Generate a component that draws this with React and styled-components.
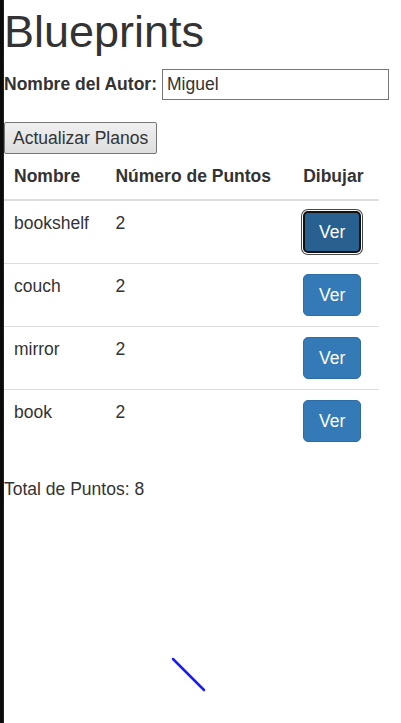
import React from "react";
import styled, { createGlobalStyle } from "styled-components";

const GlobalStyle = createGlobalStyle`
  html, body {
    margin: 0;
    padding: 0;
    background: #fff;
  }
  body {
    font-family: "Liberation Sans", Arial, sans-serif;
    font-size: 17.5px;
    line-height: 1.42857;
    color: #333;
    border-left: 3px solid #0b0b0b;
    box-shadow: inset 1px 0 0 #4a0d12;
    min-height: 723px;
    box-sizing: border-box;
  }
`;

const Page = styled.div`
  padding-left: 1px;
  width: 375px;
`;

const Title = styled.h1`
  margin: 7px 0 0;
  font-size: 45px;
  font-weight: 500;
  line-height: 1.1;
`;

const AuthorRow = styled.div`
  display: flex;
  align-items: center;
  gap: 5px;
  margin-top: 12.5px;
  width: 400px;
  label {
    font-weight: 700;
    white-space: nowrap;
    flex-shrink: 0;
  }
`;

const TextInput = styled.input`
  width: 227px;
  height: 31px;
  flex-shrink: 0;
  box-sizing: border-box;
  border: 1px solid #767676;
  padding: 1px 4px;
  font-family: "Liberation Sans", Arial, sans-serif;
  font-size: 17.5px;
  color: #333;
`;

const UpdateButton = styled.button`
  margin-top: 22px;
  height: 32px;
  padding: 0 8px;
  border: 1px solid #767676;
  border-radius: 2px;
  background: linear-gradient(#f0f0f0, #dedede);
  font-family: "Liberation Sans", Arial, sans-serif;
  font-size: 17.5px;
  color: #333;
`;

const Table = styled.table`
  width: 375px;
  border-collapse: collapse;
  margin-bottom: 25px;
  th, td {
    padding: 10px;
    text-align: left;
    vertical-align: top;
    line-height: 25px;
  }
  th {
    font-weight: 700;
    border-bottom: 2px solid #ddd;
    vertical-align: bottom;
  }
  tbody tr + tr td {
    border-top: 1px solid #ddd;
  }
`;

const VerButton = styled.button`
  width: 58px;
  height: 42px;
  border-radius: 5px;
  border: 1px solid #2e6da4;
  background: #337ab7;
  color: #fff;
  font-family: "Liberation Sans", Arial, sans-serif;
  font-size: 17.5px;
  ${(p) =>
    p.$focused &&
    `
    background: #286090;
    border: 2px solid #111;
    box-shadow: 0 0 0 1px #fff, 0 0 0 2px #444;
  `}
`;

const Total = styled.p`
  margin: 0;
`;

const Canvas = styled.svg`
  display: block;
  width: 375px;
  height: 220px;
`;

const planos = [
  { name: "bookshelf", points: 2 },
  { name: "couch", points: 2 },
  { name: "mirror", points: 2 },
  { name: "book", points: 2 },
];

export default function App() {
  const total = planos.reduce((s, p) => s + p.points, 0);
  return (
    <>
      <GlobalStyle />
      <Page>
        <Title>Blueprints</Title>
        <AuthorRow>
          <label>Nombre del Autor:</label>
          <TextInput defaultValue="Miguel" />
        </AuthorRow>
        <UpdateButton>Actualizar Planos</UpdateButton>
        <Table>
          <thead>
            <tr>
              <th>Nombre</th>
              <th>Número de Puntos</th>
              <th>Dibujar</th>
            </tr>
          </thead>
          <tbody>
            {planos.map((p, i) => (
              <tr key={p.name}>
                <td>{p.name}</td>
                <td>{p.points}</td>
                <td>
                  <VerButton $focused={i === 0}>Ver</VerButton>
                </td>
              </tr>
            ))}
          </tbody>
        </Table>
        <Total>Total de Puntos: {total}</Total>
        <Canvas viewBox="0 0 375 220">
          <line x1="169" y1="157" x2="200" y2="188" stroke="#1a1aff" strokeWidth="2.5" strokeLinecap="round" />
        </Canvas>
      </Page>
    </>
  );
}
